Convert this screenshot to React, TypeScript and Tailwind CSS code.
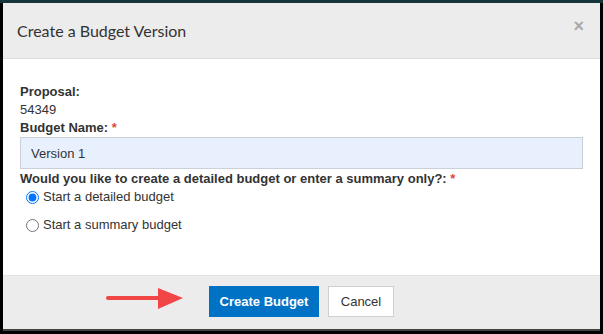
import React, { useState } from "react";

const App: React.FC = () => {
  const [name, setName] = useState("Version 1");
  const [kind, setKind] = useState("detailed");

  return (
    <div className="flex h-[334px] w-[603px] flex-col bg-black font-['Liberation_Sans',Arial,sans-serif] text-[#333]">
      <div className="h-[3px] bg-[#16353b]" />
      <div className="mx-[3px] flex flex-1 flex-col bg-white">
        {/* header */}
        <div className="flex h-[56px] items-center justify-between border-b border-[#dddddd] bg-[#ececec] pl-[14px] pr-[16px]">
          <h2 className="font-['Lato',sans-serif] text-[16px] text-[#333]">
            Create a Budget Version
          </h2>
          <span className="-mt-[10px] text-[18px] font-bold leading-none text-[#a8a8a8]">
            ×
          </span>
        </div>

        {/* body */}
        <div className="flex-1 pl-[17px] pr-[17px] pt-[24px] text-[13px] leading-[18px]">
          <div className="font-bold">Proposal:</div>
          <div>54349</div>
          <div className="font-bold">
            Budget Name: <span className="text-[#e0483b]">*</span>
          </div>
          <input
            value={name}
            onChange={(e) => setName(e.target.value)}
            className="block h-[32px] w-full border border-[#c9d0da] bg-[#e8f0fe] px-[10px] text-[13px] text-[#333] outline-none"
          />
          <div className="mt-[1px] font-bold">
            Would you like to create a detailed budget or enter a summary only?:{" "}
            <span className="text-[#e0483b]">*</span>
          </div>
          <div className="flex flex-col gap-[10px] pl-[6px]">
            <label className="flex items-center gap-[4px]">
              <input
                type="radio"
                name="kind"
                checked={kind === "detailed"}
                onChange={() => setKind("detailed")}
                className="m-0 h-[13px] w-[13px]"
              />
              Start a detailed budget
            </label>
            <label className="flex items-center gap-[4px]">
              <input
                type="radio"
                name="kind"
                checked={kind === "summary"}
                onChange={() => setKind("summary")}
                className="m-0 h-[13px] w-[13px]"
              />
              Start a summary budget
            </label>
          </div>
        </div>

        {/* footer */}
        <div className="relative flex h-[54px] items-center justify-center gap-[9px] border-t border-[#e2e2e2] bg-[#ececec] pb-[2px]">
          <svg
            className="absolute left-[101px] top-[11px]"
            width="82"
            height="24"
            viewBox="0 0 82 24"
          >
            <line x1="4" y1="11" x2="60" y2="11" stroke="#f04646" strokeWidth="4" strokeLinecap="round" />
            <polygon points="54,1 79,11 54,22" fill="#f04646" />
          </svg>
          <button className="h-[31px] w-[110px] bg-[#0072c6] text-[13px] font-bold text-white">
            Create Budget
          </button>
          <button className="h-[31px] w-[66px] border border-[#cfcfcf] bg-white text-[13px] text-[#333]">
            Cancel
          </button>
        </div>
      </div>
      <div className="mx-[3px] h-[2px] bg-[#444]" />
      <div className="h-[3px]" />
    </div>
  );
};

export default App;
